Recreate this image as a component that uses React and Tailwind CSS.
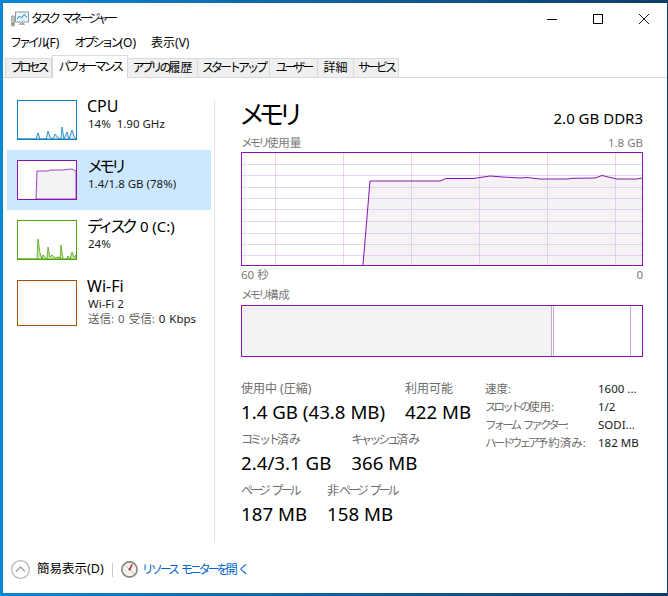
// カナ部分だけ詰める（Meiryo UI の字幅に寄せる）
function K({ children }) {
  return <span className="tracking-[-0.25em] [word-spacing:0.3em]">{children}</span>
}

const tabs = [
  { label: <K>プロセス</K>, w: 'w-[47px] border-l' },
  { label: <K>パフォーマンス</K>, w: 'w-[76px]', active: true },
  { label: <><K>アプリの</K>履歴</>, w: 'w-[70px]' },
  { label: <K>スタートアップ</K>, w: 'w-[72px]' },
  { label: <K>ユーザー</K>, w: 'w-[48px]' },
  { label: '詳細', w: 'w-[36px]' },
  { label: <K>サービス</K>, w: 'w-[45px]' },
]

const hLines = [11, 22, 34, 45, 56, 68, 80, 91, 102]
const vLines = [33, 101, 169, 237, 305, 373]
const memCurve = '121,112 128,28 198,28 204,25.5 231,25.5 248,23 261,24 278,25 285,24.5 298,26 325,26 331,25.3 353,25 360,22.5 375,26 395,26 400,25'

function AppIcon() {
  return (
    <svg width="18" height="16" viewBox="0 0 18 16" className="shrink-0">
      <rect x="0.5" y="5" width="3" height="10" fill="#b9bfc4" stroke="#8a9298" strokeWidth="0.6" />
      <rect x="1" y="12" width="2" height="1.5" fill="#58a618" />
      <rect x="4.5" y="1" width="13" height="10" fill="#e8f3fb" stroke="#8a9ba8" />
      <polyline points="6,8 8.5,5 10.5,7 13,3.5 16,6" fill="none" stroke="#1b7ec2" strokeWidth="1" />
      <path d="M9 11.5h4l1 2.5H8z" fill="#a8b0b6" />
    </svg>
  )
}

function Thumb({ color, fill, h = 'h-[40px]', points }) {
  return (
    <div className={`w-[60px] shrink-0 border bg-white ${h}`} style={{ borderColor: color }}>
      {points && (
        <svg width="58" height="38" viewBox="0 0 58 38" className="block">
          <polygon points={points} fill={fill} stroke={color} strokeWidth="0.8" strokeLinejoin="round" />
        </svg>
      )}
    </div>
  )
}

function SideItem({ name, sub, sub2, active, thumb }) {
  return (
    <div className={`flex h-[60px] pl-[10px] pt-[10px] ${active ? 'bg-[#cce8ff]' : ''}`}>
      {thumb}
      <div className="ml-[10px] -mt-[4px]">
        <div className="text-[16px] leading-[20px] text-black">{name}</div>
        <div className="pl-px text-[11.5px] leading-[15px] whitespace-pre text-[#1a1a1a]">{sub}</div>
        {sub2 && (
          <div className="pl-px text-[11.5px] leading-[15px] text-[#5f5f5f] [word-spacing:1px]">
            送信: 0 受信: <span className="text-[#1a1a1a]">0 Kbps</span>
          </div>
        )}
      </div>
    </div>
  )
}

function Stat({ label, value }) {
  return (
    <div>
      <div className="text-[12px] leading-[16px] text-[#6d6d6d] whitespace-nowrap">{label}</div>
      <div className="mt-[2px] text-[18.7px] leading-[26px] text-black whitespace-nowrap">{value}</div>
    </div>
  )
}

function SpecRow({ label, value }) {
  return (
    <div className="flex h-[18px] items-center text-[11.5px]">
      <div className="w-[113px] text-[#6d6d6d] whitespace-nowrap">{label}</div>
      <div className="text-[#1a1a1a] whitespace-nowrap">{value}</div>
    </div>
  )
}

export default function App() {
  return (
    <div className="h-[596px] w-[668px] overflow-hidden bg-gradient-to-r from-[#0a86d3] to-[#0f3d69] pt-[3px] pr-px pb-[3px] pl-[3px] font-['Noto_Sans','Noto_Sans_CJK_JP',sans-serif]">
      <div className="flex h-full flex-col bg-white">
        {/* タイトルバー */}
        <div className="flex h-[31px] shrink-0 items-center pl-[8px]">
          <AppIcon />
          <span className="ml-[2px] text-[12px] text-black"><K>タスク マネージャー</K></span>
          <div className="ml-auto flex items-center">
            <div className="flex w-[46px] justify-center">
              <svg width="10" height="10" viewBox="0 0 10 10"><path d="M0 5.5h10" stroke="#000" /></svg>
            </div>
            <div className="flex w-[46px] justify-center">
              <svg width="10" height="10" viewBox="0 0 10 10"><rect x="0.5" y="0.5" width="9" height="9" fill="none" stroke="#000" /></svg>
            </div>
            <div className="flex w-[46px] justify-center">
              <svg width="10" height="10" viewBox="0 0 10 10"><path d="M0 0l10 10M10 0L0 10" stroke="#000" strokeWidth="0.9" /></svg>
            </div>
          </div>
        </div>

        {/* メニュー */}
        <div className="flex h-[18px] shrink-0 items-center pl-[7px] text-[12px] text-black">
          <span><K>ファイル</K>(F)</span>
          <span className="ml-[15px]"><K>オプション</K>(O)</span>
          <span className="ml-[15px]">表示(V)</span>
        </div>

        {/* タブ */}
        <div className="mt-[3px] flex h-[23px] shrink-0 items-end border-b border-[#d9d9d9] pl-[2px]">
          {tabs.map((t, i) => (
            <div
              key={i}
              className={`flex items-center justify-center text-[12px] whitespace-nowrap text-black ${t.w} ${
                t.active
                  ? '-mb-px h-[23px] border border-b-0 border-[#d9d9d9] bg-white pb-px'
                  : 'h-[19px] border-t border-r border-[#d9d9d9] bg-[#f0f0f0]'
              }`}
            >
              {t.label}
            </div>
          ))}
        </div>

        {/* 本体 */}
        <div className="flex flex-1">
          <div className="w-[211px] shrink-0 pt-[12px] pr-[3px] pl-[4px]">
            <SideItem
              name="CPU"
              sub="14%  1.90 GHz"
              thumb={<Thumb color="#117dbb" fill="#d9eaf5" points="0,38 18,38 20,32 22,38 28,38 30,30 32,36 35,38 37,33 40,37 43,38 44,26 46,38 49,31 51,38 54,29 56,35 58,38" />}
            />
            <SideItem
              name={<K>メモリ</K>}
              sub="1.4/1.8 GB (78%)"
              active
              thumb={<Thumb color="#8b12ae" fill="#f4f2f4" points="18,38 19,10 30,10 32,9 45,9 47,8.7 54,8 58,10 58,38" />}
            />
            <SideItem
              name={<><K>ディスク</K><span className="ml-[6px] text-[15px]">0 (C:)</span></>}
              sub="24%"
              thumb={<Thumb color="#4da60c" fill="#c6e3ae" points="0,38 19,38 20,18 22,32 24,38 25,34 27,36 29,38 30,26 32,36 34,34 37,37 41,36 42,38 43,24 45,38 49,38 50,35 52,38 54,31 56,36 58,34 58,38" />}
            />
            <SideItem name="Wi-Fi" sub="Wi-Fi 2" sub2 thumb={<Thumb color="#a74f01" h="h-[46px]" />} />
          </div>

          <div className="mt-[22px] h-[442px] w-px shrink-0 bg-[#e3e3e3]" />

          <div className="w-[402px] shrink-0 pl-[26px] box-content">
            {/* 見出し */}
            <div className="flex h-[58px] items-end justify-between pb-[4px]">
              <span className="-mb-[2px] -ml-[2px] text-[26px] leading-[40px] text-black"><K>メモリ</K></span>
              <span className="pb-[4px] text-[15px] leading-[20px] text-black">2.0 GB DDR3</span>
            </div>
            <div className="flex h-[16px] items-start justify-between text-[11.5px] leading-[14px] text-[#7a7a7a]">
              <span><K>メモリ</K>使用量</span>
              <span>1.8 GB</span>
            </div>

            {/* 使用量グラフ */}
            <div className="h-[114px] border border-[#8b12ae] bg-white">
              <svg width="400" height="112" viewBox="0 0 400 112" className="block">
                <polygon points={`${memCurve} 400,112 121,112`} fill="#f4f2f4" />
                {hLines.map((y) => (
                  <line key={y} x1="0" x2="400" y1={y + 0.5} y2={y + 0.5} stroke="#d9b8e4" strokeOpacity="0.6" />
                ))}
                {vLines.map((x) => (
                  <line key={x} x1={x + 0.5} x2={x + 0.5} y1="0" y2="112" stroke="#d9b8e4" strokeOpacity="0.6" />
                ))}
                <polyline points={memCurve} fill="none" stroke="#8b12ae" strokeWidth="1" />
              </svg>
            </div>
            <div className="flex h-[16px] items-end justify-between text-[11.5px] leading-[14px] text-[#7a7a7a]">
              <span>60 秒</span>
              <span>0</span>
            </div>

            {/* メモリ構成 */}
            <div className="mt-[4px] flex h-[18px] items-center text-[11.5px] text-[#7a7a7a]"><K>メモリ</K>構成</div>
            <div className="mt-px flex h-[52px] border border-[#8b12ae] bg-white">
              <div className="w-[310px] border-r border-[#c9a8d4] bg-[#f4f2f4]" />
              <div className="w-[2px] border-r border-[#c9a8d4]" />
              <div className="w-[77px] border-r border-[#c9a8d4]" />
            </div>

            {/* 統計 */}
            <div className="mt-[24px] flex">
              <div className="flex w-[244px] shrink-0 flex-col gap-[7px]">
                <div className="flex gap-5">
                  <Stat label="使用中 (圧縮)" value="1.4 GB (43.8 MB)" />
                  <Stat label="利用可能" value="422 MB" />
                </div>
                <div className="flex gap-5">
                  <Stat label={<><K>コミット</K>済み</>} value="2.4/3.1 GB" />
                  <Stat label={<><K>キャッシュ</K>済み</>} value="366 MB" />
                </div>
                <div className="flex gap-5">
                  <Stat label={<K>ページ プール</K>} value="187 MB" />
                  <Stat label={<>非<K>ページ プール</K></>} value="158 MB" />
                </div>
              </div>
              <div className="-mt-px">
                <SpecRow label="速度:" value="1600 ..." />
                <SpecRow label={<><K>スロットの</K>使用:</>} value="1/2" />
                <SpecRow label={<><K>フォーム ファクター</K>:</>} value="SODI..." />
                <SpecRow label={<><K>ハードウェア</K>予約済み:</>} value="182 MB" />
              </div>
            </div>
          </div>
        </div>

        {/* フッター */}
        <div className="flex h-[46px] shrink-0 items-center pl-[8px] pb-[1px]">
          <svg width="19" height="19" viewBox="0 0 19 19" className="shrink-0">
            <circle cx="9.5" cy="9.5" r="8.8" fill="#fff" stroke="#b4b4b4" strokeWidth="1.2" />
            <path d="M5 11.5l4.5-4.5 4.5 4.5" fill="none" stroke="#a0a0a0" strokeWidth="1.3" />
          </svg>
          <span className="ml-[7px] text-[12.5px] text-black">簡易表示(D)</span>
          <div className="ml-[8px] h-[14px] w-px bg-[#c8c8c8]" />
          <svg width="17" height="17" viewBox="0 0 17 17" className="ml-[8px] shrink-0">
            <circle cx="8.5" cy="8.5" r="7.6" fill="#f4f1ea" stroke="#8a8682" strokeWidth="1.6" />
            <path d="M4 4l9 9" stroke="#b9b4aa" strokeWidth="0.8" />
            <path d="M11 3.5L8.5 9" stroke="#c92a2a" strokeWidth="1.6" />
            <circle cx="8.5" cy="8.5" r="1" fill="#555" />
          </svg>
          <span className="ml-[4px] text-[12px] text-[#0066cc]"><K>リソース モニターを</K>開く</span>
        </div>
      </div>
    </div>
  )
}
